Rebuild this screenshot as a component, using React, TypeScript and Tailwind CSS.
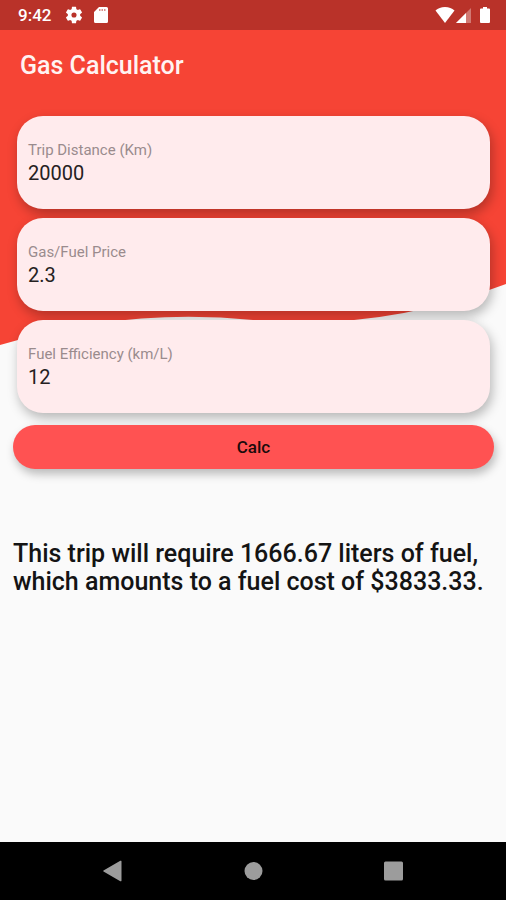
import React, { useState } from "react";

type FieldProps = {
  id: string;
  label: string;
  value: string;
  onChange: (value: string) => void;
};

const StatusBar: React.FC = () => (
  <div className="flex h-[30px] items-center justify-between bg-[#b93229] pr-4 pl-[18px] text-white">
    <div className="flex items-center">
      <span className="w-[47px] text-[17px] leading-5 font-medium">9:42</span>
      {/* Settings */}
      <svg className="size-[18px]" viewBox="1.500 1.500 21 21" fill="currentColor">
        <path d="M19.14 12.94c.04-.3.06-.61.06-.94 0-.32-.02-.64-.07-.94l2.03-1.58a.49.49 0 0 0 .12-.61l-1.92-3.32a.49.49 0 0 0-.59-.22l-2.39.96c-.5-.38-1.03-.7-1.62-.94l-.36-2.54a.48.48 0 0 0-.48-.41h-3.84c-.24 0-.43.17-.47.41l-.36 2.54c-.59.24-1.13.57-1.62.94l-2.39-.96a.48.48 0 0 0-.59.22L2.74 8.87c-.12.21-.08.47.12.61l2.03 1.58c-.05.3-.09.63-.09.94s.02.64.07.94l-2.03 1.58a.49.49 0 0 0-.12.61l1.92 3.32c.12.22.37.29.59.22l2.39-.96c.5.38 1.03.7 1.62.94l.36 2.54c.05.24.24.41.48.41h3.84c.24 0 .44-.17.47-.41l.36-2.54c.59-.24 1.13-.56 1.62-.94l2.39.96c.22.08.47 0 .59-.22l1.92-3.32a.49.49 0 0 0-.12-.61l-2.01-1.58zM12 15a3 3 0 1 1 0-6 3 3 0 0 1 0 6z" />
      </svg>
      {/* SD card */}
      <svg className="ml-[11px] h-4 w-[14px]" viewBox="0 0 14 16" fill="currentColor">
        <path d="M5 0h7.500a1.500 1.500 0 0 1 1.500 1.500v13a1.500 1.500 0 0 1-1.500 1.500h-11A1.500 1.500 0 0 1 0 14.500V5z" />
        <path d="M5 2h1.500v2H5zM7.500 2H9v2H7.500zM10 2h1.500v2H10z" fill="#b93229" fillOpacity="0.55" />
      </svg>
    </div>

    <div className="flex items-center">
      {/* Wifi */}
      <svg className="h-4 w-5" viewBox="0 0 20 16" fill="currentColor">
        <path d="M10 16 0.500 3.500C3 1.300 6 0 10 0s7 1.300 9.500 3.500z" />
      </svg>
      {/* Signal */}
      <svg className="ml-px size-[15px]" viewBox="0 0 15 15" fill="currentColor">
        <path d="M15 0v15H0z" fillOpacity="0.35" />
        <path d="M10 5v10H0z" />
      </svg>
      {/* Battery */}
      <svg className="ml-[9px] h-4 w-[10px]" viewBox="0 0 10 16" fill="currentColor">
        <path d="M3 0h4v1.500h2a1 1 0 0 1 1 1V15a1 1 0 0 1-1 1H1a1 1 0 0 1-1-1V2.500a1 1 0 0 1 1-1h2z" />
      </svg>
    </div>
  </div>
);

const Field: React.FC<FieldProps> = ({ id, label, value, onChange }) => (
  <div className="flex h-[93px] flex-col rounded-[26px] bg-[#ffebed] px-[11px] pt-6 shadow-[2px_5px_12px_rgba(0,0,0,0.28)]">
    <label htmlFor={id} className="text-[15px] leading-5 text-[#9a8b8d]">
      {label}
    </label>
    <input
      id={id}
      inputMode="decimal"
      className="w-full bg-transparent text-xl leading-[26px] text-[#252122] outline-none"
      value={value}
      onChange={(e) => onChange(e.target.value)}
    />
  </div>
);

const NavigationBar: React.FC = () => (
  <nav className="flex h-[58px] items-center justify-center gap-[116px] bg-black text-[#9c9c9c]">
    <button type="button" aria-label="Back" className="flex size-6 justify-center">
      <svg className="size-6" viewBox="0 0 24 24" fill="currentColor">
        <path d="M20.500 2.500v19a.8.8 0 0 1-1.200.700L2.500 12.600a.8.8 0 0 1 0-1.200L19.300 1.800A.8.8 0 0 1 20.500 2.500z" />
      </svg>
    </button>
    <button type="button" aria-label="Home" className="flex size-6 justify-center">
      <svg className="size-6" viewBox="0 0 24 24" fill="currentColor">
        <circle cx="12.500" cy="12" r="9" />
      </svg>
    </button>
    <button type="button" aria-label="Overview" className="flex size-6 justify-center">
      <svg className="size-6" viewBox="0 0 24 24" fill="currentColor">
        <rect x="3" y="2.500" width="19" height="19" rx="1.500" />
      </svg>
    </button>
  </nav>
);

const getResult = (distance: string, price: string, efficiency: string) => {
  const liters = Number(distance) / Number(efficiency);
  const cost = liters * Number(price);
  return `This trip will require ${liters.toFixed(2)} liters of fuel, which amounts to a fuel cost of $${cost.toFixed(2)}.`;
};

const App: React.FC = () => {
  const [distance, setDistance] = useState("20000");
  const [price, setPrice] = useState("2.3");
  const [efficiency, setEfficiency] = useState("12");
  const [result, setResult] = useState(getResult("20000", "2.3", "12"));

  const handleSubmit = (e: React.FormEvent) => {
    e.preventDefault();
    setResult(getResult(distance, price, efficiency));
  };

  return (
    <div className="flex min-h-screen flex-col bg-[#fafafa] font-[Roboto,sans-serif]">
      <StatusBar />

      <main className="relative isolate grow">
        {/* Wave behind the form */}
        <svg
          className="absolute inset-x-0 top-0 -z-10 h-[315px] w-full"
          viewBox="0 0 506 315"
          preserveAspectRatio="none"
          fill="#f64435"
        >
          <path d="M0 0H506V254Q379.500 302 253 290Q126.500 277 0 315Z" />
        </svg>

        <h1 className="px-5 pt-5 text-[25px] leading-8 font-medium text-[#fff3f2]">
          Gas Calculator
        </h1>

        <form onSubmit={handleSubmit} className="pt-[34px] pr-3 pl-[13px]">
          <div className="flex flex-col gap-[9px] px-1">
            <Field id="distance" label="Trip Distance (Km)" value={distance} onChange={setDistance} />
            <Field id="price" label="Gas/Fuel Price" value={price} onChange={setPrice} />
            <Field id="efficiency" label="Fuel Efficiency (km/L)" value={efficiency} onChange={setEfficiency} />
          </div>
          <button
            type="submit"
            className="mt-3 h-11 w-full rounded-full bg-[#ff5252] pt-px text-[17px] font-medium text-[#1c0b0b] shadow-[2px_5px_10px_rgba(0,0,0,0.26)]"
          >
            Calc
          </button>
        </form>

        <p className="px-[13px] pt-[71px] text-[25px] leading-7 font-medium text-[#141414]">
          {result}
        </p>
      </main>

      <NavigationBar />
    </div>
  );
};

export default App;
